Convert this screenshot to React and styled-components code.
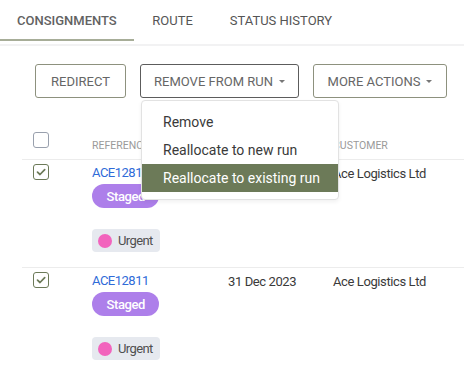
import React from 'react';
import styled, { createGlobalStyle } from 'styled-components';

const GlobalStyle = createGlobalStyle`
  body {
    margin: 0;
    background: #ffffff;
    font-family: Roboto, "Liberation Sans", Arial, sans-serif;
    color: #333;
  }
`;

const Page = styled.div`
  width: 464px;
  height: 371px;
  overflow: hidden;
  position: relative;
`;

const TabBar = styled.div`
  display: flex;
  height: 41px;
  border-bottom: 2px solid #f2f2f3;
  padding-bottom: 3px;
`;

const Tab = styled.div`
  display: flex;
  align-items: center;
  padding: 0 ${p => (p.$active ? 17 : 18.5)}px;
  font-size: 13px;
  font-weight: ${p => (p.$active ? 500 : 400)};
  color: ${p => (p.$active ? '#626262' : '#555555')};
  text-transform: uppercase;
  border-bottom: 2px solid ${p => (p.$active ? '#a7ad98' : 'transparent')};
  box-sizing: border-box;
  height: 41px;
  padding-top: 2px;
`;

const Toolbar = styled.div`
  display: flex;
  gap: 14px;
  padding: 18px 0 0 35px;
`;

const ButtonWrap = styled.div`
  position: relative;
`;

const ActionButton = styled.button`
  height: 34px;
  width: ${p => p.$width}px;
  display: flex;
  align-items: center;
  justify-content: center;
  gap: 6px;
  background: #fff;
  border: 1px solid ${p => (p.$open ? '#5c5c5c' : '#8d917e')};
  border-radius: 3px;
  font-family: inherit;
  font-size: 13px;
  font-weight: 400;
  color: #666666;
  text-transform: uppercase;
  padding: 0;
`;

const Caret = styled.span`
  width: 0;
  height: 0;
  border-left: 3px solid transparent;
  border-right: 3px solid transparent;
  border-top: 3.5px solid #777;
  margin-top: 1px;
`;

const Menu = styled.div`
  position: absolute;
  top: 36px;
  left: 1px;
  width: 198px;
  padding: 7px 0;
  background: #fff;
  border: 1px solid #e2e2e2;
  border-radius: 4px;
  box-shadow: 0 2px 4px rgba(0, 0, 0, 0.06);
  box-sizing: border-box;
  z-index: 5;
`;

const MenuItem = styled.div`
  height: 28px;
  display: flex;
  align-items: center;
  padding-left: 21px;
  font-size: 14px;
  color: ${p => (p.$active ? '#ffffff' : '#3a3a3a')};
  background: ${p => (p.$active ? '#6c7a58' : 'transparent')};
`;

const Table = styled.div`
  margin: 27px 0 0 22px;
`;

const Row = styled.div`
  display: grid;
  grid-template-columns: 70px 136px 105px 1fr;
  border-bottom: 1px solid #ececec;
  height: ${p => (p.$head ? 35 : 108)}px;
  box-sizing: border-box;
`;

const CheckCell = styled.div`
  padding: ${p => (p.$head ? 7 : 4)}px 0 0 11px;
`;

const Checkbox = styled.div`
  width: 16px;
  height: 16px;
  box-sizing: border-box;
  border: 1.5px solid ${p => (p.$checked ? '#6c7a58' : '#99a0ad')};
  border-radius: 3px;
  display: flex;
  align-items: center;
  justify-content: center;
`;

const HeadCell = styled.div`
  padding-top: 14px;
  font-size: 10.5px;
  line-height: 13px;
  color: #9a9a9a;
  text-transform: uppercase;
  white-space: nowrap;
`;

const Cell = styled.div`
  padding-top: 5px;
  font-size: 13px;
  letter-spacing: -0.4px;
  line-height: 18px;
  color: #3a3a3a;
  white-space: nowrap;
`;

const RefCell = styled.div`
  padding-top: 4px;
  display: flex;
  flex-direction: column;
  align-items: flex-start;
`;

const RefLink = styled.a`
  font-size: 13px;
  letter-spacing: -0.5px;
  line-height: 18px;
  color: #2f6bd8;
  text-decoration: none;
`;

const StatusBadge = styled.span`
  margin-top: 2px;
  height: 24px;
  padding: 0 14.5px;
  border-radius: 12px;
  background: #ad7fea;
  color: #fff;
  font-size: 13px;
  letter-spacing: -0.4px;
  font-weight: 500;
  display: flex;
  align-items: center;
`;

const TagChip = styled.span`
  margin-top: 21px;
  height: 23px;
  padding: 0 7px 0 6px;
  border-radius: 4px;
  background: #e6e9ef;
  color: #4f4f4f;
  font-size: 13px;
  letter-spacing: -0.6px;
  display: flex;
  align-items: center;
  gap: 6px;
`;

const Dot = styled.span`
  width: 14px;
  height: 14px;
  border-radius: 50%;
  background: ${p => p.$color};
`;

const Check = () => (
  <svg width="10" height="8" viewBox="0 0 10 8">
    <path d="M1.5 4.2 L4 6.5 L8.7 1.6" fill="none" stroke="#6c7a58" strokeWidth="1.7" strokeLinecap="round" strokeLinejoin="round" />
  </svg>
);

const rows = [
  { ref: 'ACE12811', date: '31 Dec 2023', customer: 'Ace Logistics Ltd' },
  { ref: 'ACE12811', date: '31 Dec 2023', customer: 'Ace Logistics Ltd' },
];

export default function App() {
  return (
    <Page>
      <GlobalStyle />
      <TabBar>
        <Tab $active>Consignments</Tab>
        <Tab>Route</Tab>
        <Tab>Status History</Tab>
      </TabBar>

      <Toolbar>
        <ActionButton $width={91}>Redirect</ActionButton>
        <ButtonWrap>
          <ActionButton $width={159} $open>
            Remove from run <Caret />
          </ActionButton>
          <Menu>
            <MenuItem>Remove</MenuItem>
            <MenuItem>Reallocate to new run</MenuItem>
            <MenuItem $active>Reallocate to existing run</MenuItem>
          </Menu>
        </ButtonWrap>
        <ActionButton $width={134}>
          More actions <Caret />
        </ActionButton>
      </Toolbar>

      <Table>
        <Row $head>
          <CheckCell $head>
            <Checkbox />
          </CheckCell>
          <HeadCell>Reference</HeadCell>
          <HeadCell>Date</HeadCell>
          <HeadCell>Customer</HeadCell>
        </Row>
        {rows.map((r, i) => (
          <Row key={i}>
            <CheckCell>
              <Checkbox $checked>
                <Check />
              </Checkbox>
            </CheckCell>
            <RefCell>
              <RefLink href="#">{r.ref}</RefLink>
              <StatusBadge>Staged</StatusBadge>
              <TagChip>
                <Dot $color="#f264bd" />
                Urgent
              </TagChip>
            </RefCell>
            <Cell>{r.date}</Cell>
            <Cell>{r.customer}</Cell>
          </Row>
        ))}
      </Table>
    </Page>
  );
}
